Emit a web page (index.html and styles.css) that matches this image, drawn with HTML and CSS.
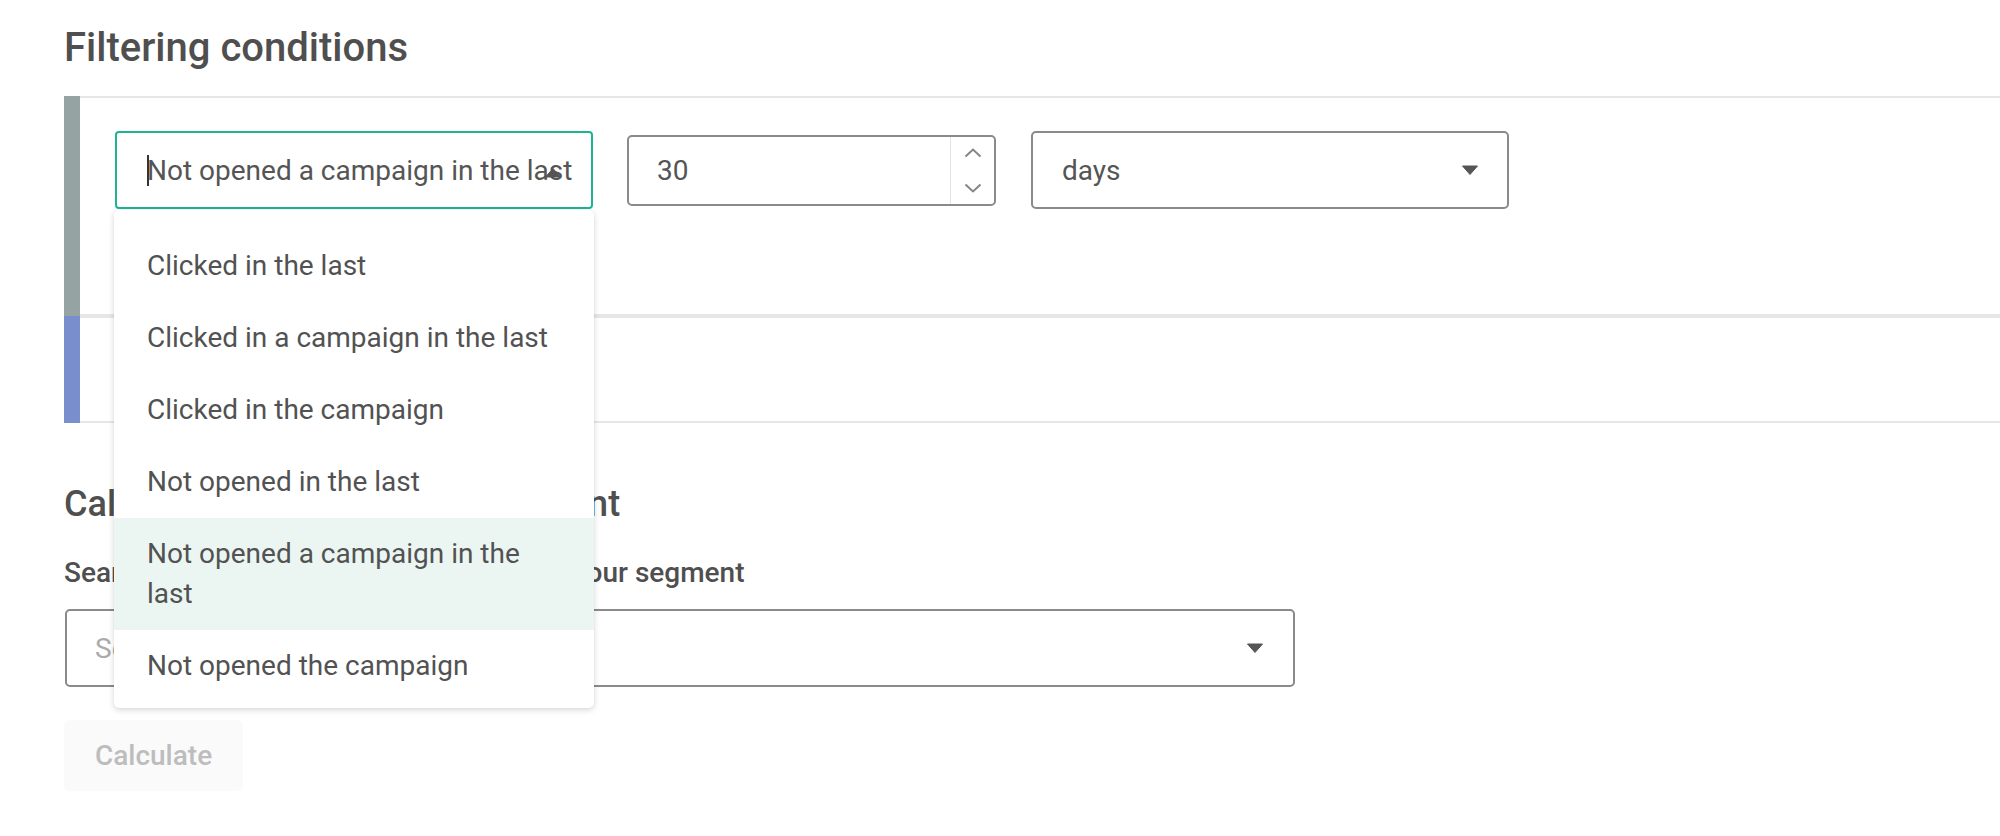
FILE: index.html
```html
<!DOCTYPE html>
<html lang="en">
<head>
<meta charset="utf-8">
<title>Filtering conditions</title>
<link rel="stylesheet" href="styles.css">
</head>
<body>
<main class="page">
  <h2 class="title">Filtering conditions</h2>

  <div class="conditions">
    <div class="cond">
      <div class="cond-bar bar-gray"></div>
      <div class="cond-body cond-body-main">
        <div class="row">
          <div class="combo">
            <div class="field field-focus">
              <span class="caret"></span><span class="field-text">Not opened a campaign in the last</span>
              <svg class="tri tri-up" width="18" height="11" viewBox="0 0 18 11"><path d="M1.5 10 H16.5 L9 1.5 Z" fill="#555" stroke="#555" stroke-width="1" stroke-linejoin="round"/></svg>
            </div>
            <ul class="menu">
              <li class="menu-item">Clicked in the last</li>
              <li class="menu-item">Clicked in a campaign in the last</li>
              <li class="menu-item">Clicked in the campaign</li>
              <li class="menu-item">Not opened in the last</li>
              <li class="menu-item menu-item-active">Not opened a campaign in the last</li>
              <li class="menu-item">Not opened the campaign</li>
            </ul>
          </div>

          <div class="field field-num">
            <span class="field-text">30</span>
            <div class="spinner">
              <svg width="18" height="10" viewBox="0 0 18 10"><path d="M1.5 8.5 L9 1.5 L16.5 8.5" fill="none" stroke="#858585" stroke-width="2"/></svg>
              <svg width="18" height="10" viewBox="0 0 18 10"><path d="M1.5 1.5 L9 8.5 L16.5 1.5" fill="none" stroke="#858585" stroke-width="2"/></svg>
            </div>
          </div>

          <div class="field field-select field-days">
            <span class="field-text">days</span>
            <svg class="tri" width="18" height="11" viewBox="0 0 18 11"><path d="M1.5 1 H16.5 L9 9.5 Z" fill="#555" stroke="#555" stroke-width="1" stroke-linejoin="round"/></svg>
          </div>
        </div>
      </div>
    </div>

    <div class="cond">
      <div class="cond-bar bar-blue"></div>
      <div class="cond-body cond-body-empty"></div>
    </div>
  </div>

  <h3 class="subtitle">Calculate the size of your segment</h3>
  <label class="label">Search for a campaign used to calculate your segment</label>
  <div class="field field-select field-search">
    <span class="placeholder">Search for a campaign</span>
    <svg class="tri" width="18" height="11" viewBox="0 0 18 11"><path d="M1.5 1 H16.5 L9 9.5 Z" fill="#555" stroke="#555" stroke-width="1" stroke-linejoin="round"/></svg>
  </div>
  <button class="btn" type="button">Calculate</button>
</main>
</body>
</html>
```

FILE: styles.css
```css
* {
  box-sizing: border-box;
}

html, body {
  margin: 0;
  padding: 0;
  background: #ffffff;
}

body {
  font-family: Roboto, "Liberation Sans", Arial, sans-serif;
  color: #555555;
  width: 2000px;
  height: 836px;
  overflow: hidden;
}

.page {
  padding: 24px 0 0 64px;
}

.title {
  margin: 0;
  font-size: 40px;
  line-height: 48px;
  font-weight: 500;
  color: #4f4f4f;
}

.conditions {
  margin-top: 24px;
  display: flex;
  flex-direction: column;
}

.cond {
  display: flex;
}

.cond-bar {
  width: 16px;
  flex: none;
}

.bar-gray {
  background: #95a3a2;
}

.bar-blue {
  background: #788ecd;
}

.cond-body {
  flex: 1;
  border-top: 2px solid #e6e6e6;
  border-bottom: 2px solid #e6e6e6;
}

.cond-body-main {
  padding: 33px 0 105px 35px;
  height: 220px;
}

.cond-body-empty {
  height: 107px;
}

.row {
  display: flex;
  align-items: center;
  gap: 34px;
}

.combo {
  position: relative;
  flex: none;
}

.field {
  display: flex;
  align-items: center;
  border: 2px solid #8a8a8a;
  border-radius: 5px;
  font-size: 28px;
  color: #555555;
  background: #ffffff;
}

.field-text {
  white-space: nowrap;
}

.field-focus {
  position: relative;
  width: 478px;
  height: 78px;
  padding: 0 30px;
  border-color: #1db394;
  border-radius: 4px;
  overflow: hidden;
}

.caret {
  display: inline-block;
  width: 2px;
  height: 31px;
  background: #333333;
  margin-right: -2px;
  flex: none;
}

.tri-up {
  position: absolute;
  right: 29px;
  top: 34px;
}

.menu {
  position: absolute;
  z-index: 10;
  top: 79px;
  left: -1px;
  width: 480px;
  margin: 0;
  padding: 20px 0 6px;
  list-style: none;
  background: #ffffff;
  border-radius: 5px;
  box-shadow: 0 2px 6px rgba(0, 0, 0, 0.16), 0 0 1px rgba(0, 0, 0, 0.08);
}

.menu-item {
  padding: 16px 32px 16px 33px;
  font-size: 28px;
  line-height: 40px;
  color: #525252;
}

.menu-item-active {
  background: #ebf6f3;
}

.field-num {
  width: 369px;
  height: 71px;
  padding-left: 28px;
  margin-left: 0;
}

.spinner {
  margin-left: auto;
  width: 44px;
  height: 100%;
  border-left: 1px solid #e3e3e3;
  display: flex;
  flex-direction: column;
  align-items: center;
  justify-content: center;
  gap: 25px;
}

.spinner svg {
  display: block;
}

.field-select {
  justify-content: space-between;
}

.field-days {
  width: 478px;
  height: 78px;
  padding: 0 28px 0 29px;
  margin-left: 1px;
}

.tri {
  display: block;
  flex: none;
}

.subtitle {
  margin: 60px 0 0;
  font-size: 36px;
  line-height: 43px;
  font-weight: 500;
  color: #4f4f4f;
}

.label {
  display: block;
  margin-top: 27px;
  font-size: 28px;
  line-height: 40px;
  font-weight: 500;
  color: #4f4f4f;
}

.field-search {
  margin: 16px 0 0 1px;
  width: 1230px;
  height: 78px;
  padding: 0 29px 0 28px;
}

.placeholder {
  color: #ababab;
  white-space: nowrap;
}

.btn {
  display: block;
  margin-top: 33px;
  width: 179px;
  height: 71px;
  padding: 0;
  border: none;
  border-radius: 6px;
  background: #fafafa;
  font-family: Roboto, "Liberation Sans", Arial, sans-serif;
  font-size: 28px;
  font-weight: 500;
  color: #bdbdbd;
}
```
